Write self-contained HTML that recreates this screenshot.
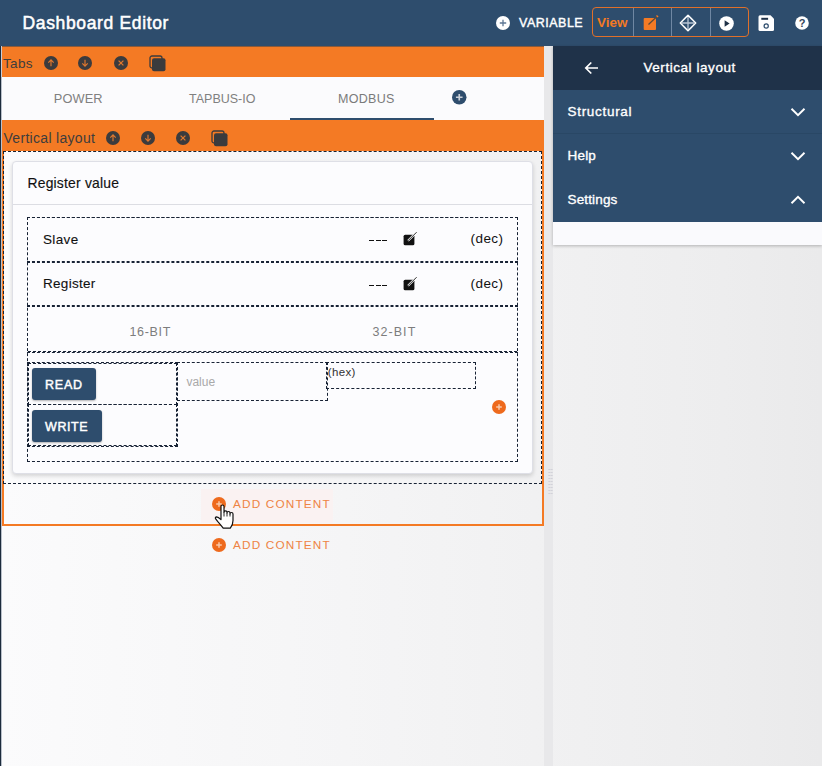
<!DOCTYPE html>
<html><head><meta charset="utf-8">
<style>
*{margin:0;padding:0;box-sizing:border-box}
html,body{width:822px;height:766px;overflow:hidden;background:linear-gradient(90deg,#fbfbfc 0%,#f5f5f6 42%,#ededee 88%,#eaeaeb 100%);font-family:"Liberation Sans",sans-serif;position:relative}
.a{position:absolute}
.t{position:absolute;line-height:1;white-space:nowrap}
svg{position:absolute;overflow:visible}
.obar{background:#f47a24}
.dash{border:1px dashed #172234}
</style></head><body>

<!-- ===== top header ===== -->
<div class="a" style="left:0;top:0;width:822px;height:46px;background:#2e4d6d"></div>
<div class="t" style="left:22.5px;top:15px;font-size:17.5px;letter-spacing:0.65px;-webkit-text-stroke:0.5px #fff;color:#fff">Dashboard Editor</div>

<!-- variable button -->
<svg style="left:496px;top:15.7px" width="14" height="14" viewBox="0 0 14 14"><circle cx="7" cy="7" r="7" fill="#fff"/><path d="M7 3.8v6.4M3.8 7h6.4" stroke="#5d7794" stroke-width="1.3"/></svg>
<div class="t" style="left:519px;top:17.2px;font-size:12.5px;letter-spacing:0.5px;-webkit-text-stroke:0.4px #fff;color:#fff">VARIABLE</div>

<!-- mode group -->
<div class="a" style="left:592px;top:7px;width:157px;height:30px;border:1px solid #e0702a;border-radius:4px"></div>
<div class="a" style="left:633px;top:8px;width:1px;height:28px;background:#6f87a3"></div>
<div class="a" style="left:671px;top:8px;width:1px;height:28px;background:#6f87a3"></div>
<div class="a" style="left:710px;top:8px;width:1px;height:28px;background:#6f87a3"></div>
<div class="t" style="left:597px;top:15.9px;font-size:13.5px;font-weight:bold;color:#f47a24">View</div>
<svg style="left:643px;top:15px" width="16" height="16" viewBox="0 0 16 16"><rect x="0.7" y="3" width="12.3" height="12" rx="1" fill="#f47a24"/><path d="M5.5 9.5L14.5 1" stroke="#5a4a3a" stroke-width="1.2"/><path d="M13.5 0.5l1.6 1.5" stroke="#f47a24" stroke-width="1.2"/></svg>
<svg style="left:679px;top:14px" width="18" height="18" viewBox="0 0 18 18"><path d="M9 3v12M3 9h12" stroke="#b9c5d4" stroke-width="1.3"/><path d="M5.1 5.1L9 1.2L12.9 5.1M12.9 5.1M5.1 5.1M5.1 12.9L9 16.8L12.9 12.9M5.1 5.1M5.0 5.2L1.3 9L5.0 12.8M13 5.2L16.7 9L13 12.8" fill="none" stroke="#fff" stroke-width="1.5" stroke-linecap="round" stroke-linejoin="round"/></svg>
<svg style="left:718.5px;top:15.6px" width="15" height="15" viewBox="0 0 15 15"><circle cx="7.5" cy="7.5" r="7.3" fill="#fff"/><path d="M5.6 4.3L10.6 7.5L5.6 10.7Z" fill="#1f3147"/></svg>
<svg style="left:758px;top:15px" width="17" height="17" viewBox="0 0 17 17"><path d="M2 0.3H12.5L16 3.8V14.5Q16 16 14.5 16H2Q0.5 16 0.5 14.5V1.8Q0.5 0.3 2 0.3Z" fill="#fff"/><rect x="3.3" y="2.8" width="6.8" height="2" fill="#1f3147"/><circle cx="8.2" cy="11" r="2.1" fill="none" stroke="#2e4d6d" stroke-width="1.2"/></svg>
<svg style="left:795px;top:16px" width="14" height="14" viewBox="0 0 14 14"><circle cx="7" cy="7" r="6.8" fill="#fff"/><text x="7" y="11" text-anchor="middle" font-family="Liberation Sans" font-weight="bold" font-size="11" fill="#33465c">?</text></svg>

<!-- ===== left editor ===== -->
<div class="a" style="left:0;top:46px;width:1px;height:720px;background:#1c2b3c"></div>
<div class="a" style="left:1px;top:77px;width:1px;height:689px;background:#b9c0ca"></div>

<!-- tabs bar -->
<div class="a obar" style="left:2px;top:46px;width:542px;height:31px"></div><div class="a" style="left:1px;top:46px;width:1px;height:31px;background:#c8ccd4"></div><div class="a" style="left:2px;top:46px;width:542px;height:1px;background:#8a5a3a"></div>
<div class="t" style="left:3px;top:56.8px;font-size:13.5px;letter-spacing:0.35px;color:#3d3d3d">Tabs</div>
<svg style="left:43.5px;top:56px" width="14" height="14" viewBox="0 0 14 14"><circle cx="7" cy="7" r="7" fill="#3b3b3d"/><path d="M7 10.3V4M4.3 6.6L7 3.9L9.7 6.6" fill="none" stroke="#e0782e" stroke-width="1.15"/></svg>
<svg style="left:78px;top:56px" width="14" height="14" viewBox="0 0 14 14"><circle cx="7" cy="7" r="7" fill="#3b3b3d"/><path d="M7 3.7V10M4.3 7.4L7 10.1L9.7 7.4" fill="none" stroke="#e0782e" stroke-width="1.15"/></svg>
<svg style="left:114px;top:56px" width="14" height="14" viewBox="0 0 14 14"><circle cx="7" cy="7" r="7" fill="#3b3b3d"/><path d="M4.6 4.6L9.4 9.4M9.4 4.6L4.6 9.4" fill="none" stroke="#e0782e" stroke-width="1.25"/></svg>
<svg style="left:149px;top:54.5px" width="17" height="17" viewBox="0 0 17 17"><rect x="1" y="1" width="12" height="12" rx="2" fill="none" stroke="#3b3b3d" stroke-width="1.3"/><rect x="3" y="3.2" width="13.5" height="13" rx="2" fill="#3b3b3d"/></svg>

<!-- tabs -->
<div class="a" style="left:2px;top:77px;width:542px;height:43px;background:#fbfbfd"></div>
<div class="t" style="left:53.8px;top:92.9px;font-size:12.8px;letter-spacing:0.1px;color:#808080">POWER</div>
<div class="t" style="left:189px;top:92.9px;font-size:12.5px;color:#808080">TAPBUS-IO</div>
<div class="t" style="left:338px;top:92.5px;font-size:12.5px;letter-spacing:0.3px;color:#7a7a7a">MODBUS</div>
<div class="a" style="left:290px;top:118px;width:144px;height:1.5px;background:#2e4d6d"></div>
<svg style="left:451.5px;top:89.7px" width="14.5" height="14.5" viewBox="0 0 14 14"><circle cx="7" cy="7" r="7" fill="#2e4d6d"/><path d="M7 3.8v6.4M3.8 7h6.4" stroke="#c9cfd8" stroke-width="1.6"/></svg>

<!-- vertical layout bar -->
<div class="a obar" style="left:2px;top:120px;width:542px;height:31px"></div>
<div class="t" style="left:3.5px;top:130.9px;font-size:14px;letter-spacing:0.3px;color:#3d3d3d">Vertical layout</div>
<svg style="left:105.7px;top:131px" width="14" height="14" viewBox="0 0 14 14"><circle cx="7" cy="7" r="7" fill="#3b3b3d"/><path d="M7 10.3V4M4.3 6.6L7 3.9L9.7 6.6" fill="none" stroke="#e0782e" stroke-width="1.15"/></svg>
<svg style="left:141px;top:131px" width="14" height="14" viewBox="0 0 14 14"><circle cx="7" cy="7" r="7" fill="#3b3b3d"/><path d="M7 3.7V10M4.3 7.4L7 10.1L9.7 7.4" fill="none" stroke="#e0782e" stroke-width="1.15"/></svg>
<svg style="left:176.2px;top:131px" width="14" height="14" viewBox="0 0 14 14"><circle cx="7" cy="7" r="7" fill="#3b3b3d"/><path d="M4.6 4.6L9.4 9.4M9.4 4.6L4.6 9.4" fill="none" stroke="#e0782e" stroke-width="1.25"/></svg>
<svg style="left:211px;top:129.5px" width="17" height="17" viewBox="0 0 17 17"><rect x="1" y="1" width="12" height="12" rx="2" fill="none" stroke="#3b3b3d" stroke-width="1.3"/><rect x="3" y="3.2" width="13.5" height="13" rx="2" fill="#3b3b3d"/></svg>

<!-- orange frame -->
<div class="a" style="left:2px;top:151px;width:542px;height:375px;border:2px solid #f47a24;border-top:none"></div>
<!-- outer dashed -->
<div class="a dash" style="left:3px;top:151px;width:539px;height:333px"></div>

<!-- card -->
<div class="a" style="left:12px;top:161px;width:521px;height:313px;background:#fcfcfe;border:1px solid #dedfe6;border-radius:4px;box-shadow:0 2px 4px rgba(0,0,0,.16)"></div>
<div class="a" style="left:13px;top:204px;width:519px;height:1px;background:#dcdde3"></div>
<div class="t" style="left:27.5px;top:176.5px;font-size:13.9px;letter-spacing:0.2px;-webkit-text-stroke:0.15px #111;color:#111">Register value</div>

<!-- inner dashed container -->
<div class="a dash" style="left:27px;top:217px;width:491px;height:245px"></div>
<div class="a dash" style="left:27px;top:217px;width:491px;height:46px;border-width:1px 0"></div>
<div class="a dash" style="left:27px;top:261px;width:491px;height:46px;border-width:1px 0"></div>
<div class="a dash" style="left:27px;top:305px;width:491px;height:48px;border-width:1px 0"></div>
<div class="a" style="left:28px;top:351px;width:489px;height:1px;border-top:1px dashed #172234"></div>

<div class="t" style="left:43px;top:232.7px;font-size:13.5px;letter-spacing:0.35px;-webkit-text-stroke:0.1px #111;color:#111">Slave</div>
<div class="a" style="left:368.7px;top:239.7px;width:5px;height:1.4px;background:#111"></div><div class="a" style="left:375.5px;top:239.7px;width:5px;height:1.4px;background:#111"></div><div class="a" style="left:382.3px;top:239.7px;width:5px;height:1.4px;background:#111"></div>
<svg style="left:403px;top:231px" width="15" height="15" viewBox="0 0 15 15"><rect x="0.6" y="3.7" width="10.8" height="10.6" rx="1.6" fill="#111"/><path d="M5 9.8L13.6 1.2" stroke="#fff" stroke-width="2"/><path d="M5 9.8L13.6 1.2" stroke="#111" stroke-width="0.9"/></svg>
<div class="t" style="left:470.5px;top:232.3px;font-size:13.5px;letter-spacing:0.45px;color:#111">(dec)</div>

<div class="t" style="left:43px;top:276.9px;font-size:13.5px;letter-spacing:0.3px;-webkit-text-stroke:0.1px #111;color:#111">Register</div>
<div class="a" style="left:368.7px;top:284.7px;width:5px;height:1.4px;background:#111"></div><div class="a" style="left:375.5px;top:284.7px;width:5px;height:1.4px;background:#111"></div><div class="a" style="left:382.3px;top:284.7px;width:5px;height:1.4px;background:#111"></div>
<svg style="left:403px;top:276px" width="15" height="15" viewBox="0 0 15 15"><rect x="0.6" y="3.7" width="10.8" height="10.6" rx="1.6" fill="#111"/><path d="M5 9.8L13.6 1.2" stroke="#fff" stroke-width="2"/><path d="M5 9.8L13.6 1.2" stroke="#111" stroke-width="0.9"/></svg>
<div class="t" style="left:470.5px;top:277.3px;font-size:13.5px;letter-spacing:0.45px;color:#111">(dec)</div>

<div class="t" style="left:129.5px;top:325.5px;font-size:12.5px;letter-spacing:0.65px;color:#7d7d7d">16-BIT</div>
<div class="t" style="left:372.5px;top:325.5px;font-size:12.5px;letter-spacing:1.05px;color:#7d7d7d">32-BIT</div>

<!-- read/write -->
<div class="a dash" style="left:27px;top:362px;width:151px;height:85px"></div>
<div class="a dash" style="left:28px;top:363px;width:149px;height:41.5px"></div>
<div class="a dash" style="left:28px;top:404px;width:149px;height:42px"></div>
<div class="a" style="left:32px;top:368px;width:64px;height:32px;background:#2e4d6d;border-radius:3px;box-shadow:0 1px 2px rgba(0,0,0,.3)"></div>
<div class="t" style="left:45px;top:379.2px;font-size:12.5px;letter-spacing:0.8px;-webkit-text-stroke:0.45px #fff;color:#fff">READ</div>
<div class="a" style="left:32px;top:410px;width:70px;height:32px;background:#2e4d6d;border-radius:3px;box-shadow:0 1px 2px rgba(0,0,0,.3)"></div>
<div class="t" style="left:45px;top:421px;font-size:12.5px;letter-spacing:0.6px;-webkit-text-stroke:0.45px #fff;color:#fff">WRITE</div>

<div class="a dash" style="left:177px;top:362px;width:151px;height:39px"></div>
<div class="t" style="left:186.4px;top:375.5px;font-size:12px;color:#a9a9a9">value</div>
<div class="a dash" style="left:326px;top:362px;width:150px;height:27px"></div>
<div class="t" style="left:327.8px;top:366.7px;font-size:11.5px;letter-spacing:0.35px;color:#333">(hex)</div>
<svg style="left:492px;top:399.7px" width="14" height="14" viewBox="0 0 14 14"><circle cx="7" cy="7" r="7" fill="#ee6a1d"/><path d="M7 4.2v5.6M4.2 7h5.6" stroke="#f9c8a8" stroke-width="1.5"/></svg>

<!-- add content -->
<div class="a" style="left:201px;top:489px;width:132px;height:34px;background:#faf2f2"></div>
<svg style="left:212.3px;top:496.7px" width="14" height="14" viewBox="0 0 14 14"><circle cx="7" cy="7" r="7" fill="#ee6a1d"/><path d="M7 4.2v5.6M4.2 7h5.6" stroke="#f9c8a8" stroke-width="1.5"/></svg>
<div class="t" style="left:233px;top:498.6px;font-size:11.8px;letter-spacing:1.15px;color:#ee8444">ADD CONTENT</div>
<svg style="left:212.3px;top:537.6px" width="14" height="14" viewBox="0 0 14 14"><circle cx="7" cy="7" r="7" fill="#ee6a1d"/><path d="M7 4.2v5.6M4.2 7h5.6" stroke="#f9c8a8" stroke-width="1.5"/></svg>
<div class="t" style="left:233px;top:539.8px;font-size:11.8px;letter-spacing:1.15px;color:#ee8444">ADD CONTENT</div>

<!-- cursor -->
<svg style="left:214px;top:504px" width="21" height="26" viewBox="0 0 21 26"><path d="M7 12V2.6Q7 1 8.5 1Q10 1 10 2.6V8.3Q10 6.8 11.5 6.8Q13 6.8 13 8.3V9Q13 7.5 14.5 7.5Q16 7.5 16 9V10Q16 8.5 17.5 8.5Q19 8.5 19 10V16.5Q19 21 16.3 24.2H9.2Q7.2 21.5 3.6 17.4L1.5 14.6Q1 13.1 2.6 12.9Q4.2 12.9 7 15.6Z" fill="#fff" stroke="#111" stroke-width="1.2" stroke-linejoin="round"/><path d="M10 8.3V12.5M13 9V12.5M16 10V12.5" stroke="#111" stroke-width="0.9"/></svg>

<!-- splitter -->
<div class="a" style="left:544px;top:46px;width:9px;height:720px;background:#e8e8ea"></div>
<div class="a" style="left:547.5px;top:468px;width:5px;height:26px;background-image:radial-gradient(circle,#cfcfd6 0.7px,transparent 1px);background-size:2.5px 3px"></div>

<!-- ===== right panel ===== -->
<div class="a" style="left:553px;top:46px;width:269px;height:199px;background:#fafafd;box-shadow:0 1px 3px rgba(0,0,0,.25)"></div>
<div class="a" style="left:553px;top:46px;width:269px;height:43.5px;background:#1f3249"></div>
<svg style="left:584px;top:60.5px" width="15" height="14" viewBox="0 0 15 14"><path d="M14 7H2M7.3 1.5L1.8 7L7.3 12.5" fill="none" stroke="#fff" stroke-width="1.7"/></svg>
<div class="t" style="left:643.5px;top:61.2px;font-size:13.5px;letter-spacing:0.55px;-webkit-text-stroke:0.35px #fff;color:#fff">Vertical layout</div>

<div class="a" style="left:553px;top:89.5px;width:269px;height:132px;background:#2e4d6d"></div>
<div class="a" style="left:553px;top:132.5px;width:269px;height:1px;background:#294765"></div>
<div class="t" style="left:567.5px;top:105.1px;font-size:13.5px;letter-spacing:0.7px;-webkit-text-stroke:0.35px #fff;color:#fff">Structural</div>
<div class="t" style="left:567.5px;top:149.1px;font-size:13.5px;letter-spacing:0.2px;-webkit-text-stroke:0.35px #fff;color:#fff">Help</div>
<div class="t" style="left:567.5px;top:193.1px;font-size:13.5px;letter-spacing:0.15px;-webkit-text-stroke:0.35px #fff;color:#fff">Settings</div>
<svg style="left:790px;top:107px" width="16" height="10" viewBox="0 0 16 10"><path d="M1.5 1.8L8 8.2L14.5 1.8" fill="none" stroke="#fff" stroke-width="1.9"/></svg>
<svg style="left:790px;top:151px" width="16" height="10" viewBox="0 0 16 10"><path d="M1.5 1.8L8 8.2L14.5 1.8" fill="none" stroke="#fff" stroke-width="1.9"/></svg>
<svg style="left:790px;top:194.5px" width="16" height="10" viewBox="0 0 16 10"><path d="M1.5 8.2L8 1.8L14.5 8.2" fill="none" stroke="#fff" stroke-width="1.9"/></svg>

</body></html>
